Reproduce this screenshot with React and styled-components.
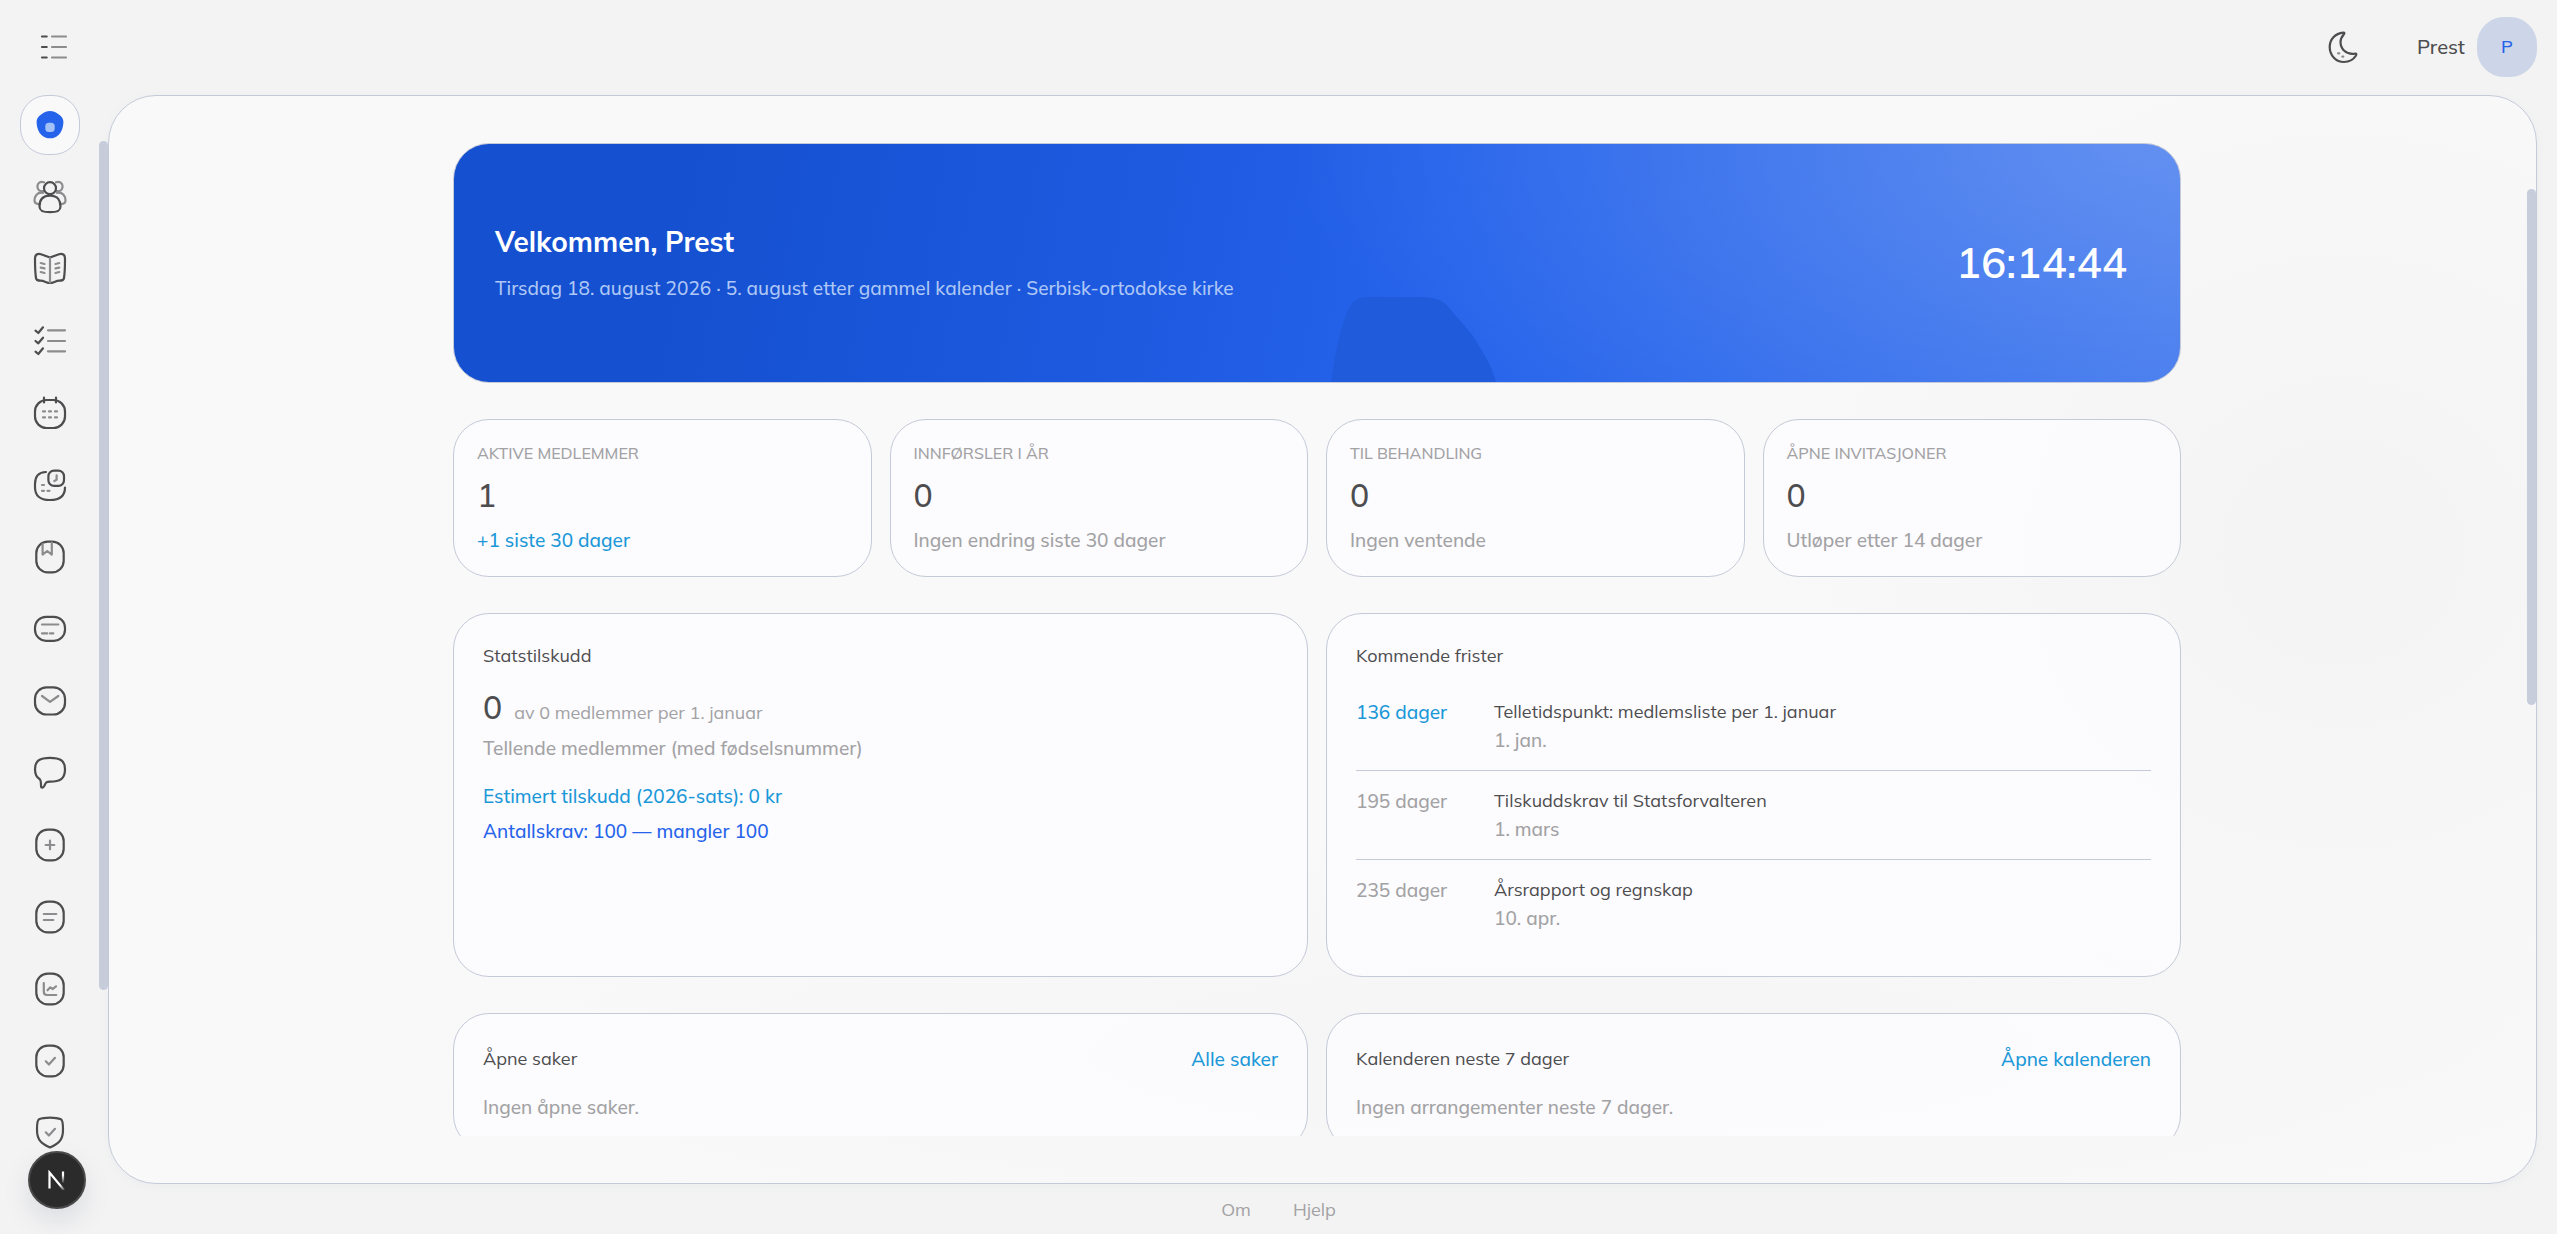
import React from 'react';
import styled, { createGlobalStyle } from 'styled-components';

const stats = [
    { label: 'AKTIVE MEDLEMMER', value: '1', note: '+1 siste 30 dager', accent: true },
    { label: 'INNFØRSLER I ÅR', value: '0', note: 'Ingen endring siste 30 dager' },
    { label: 'TIL BEHANDLING', value: '0', note: 'Ingen ventende' },
    { label: 'ÅPNE INVITASJONER', value: '0', note: 'Utløper etter 14 dager' },
];

const deadlines = [
    { days: '136 dager', title: 'Telletidspunkt: medlemsliste per 1. januar', date: '1. jan.', accent: true },
    { days: '195 dager', title: 'Tilskuddskrav til Statsforvalteren', date: '1. mars' },
    { days: '235 dager', title: 'Årsrapport og regnskap', date: '10. apr.' },
];

// Rounded portrait frame shared by many of the menu icons
const Frame = () => <rect x="4.3" y="2.7" width="27.4" height="30.6" rx="11.5" />;

const HomeIcon = () => (
    <Icon viewBox="0 0 36 36">
        <path
            d="M18 4C15 4 12.5 5.2 9.5 7.2C6 9.4 4.3 12 4.6 16C4.9 21 6.5 25.2 9.5 28C12 30.6 14.5 31.3 18 31.3C21.5 31.3 24 30.6 26.5 28C29.5 25.2 31.1 21 31.4 16C31.7 12 30 9.4 26.5 7.2C23.5 5.2 21 4 18 4Z"
            fill="#2563eb"
            stroke="none"
        />
        <rect x="13.3" y="15.7" width="9.4" height="9.4" rx="3.6" fill="#a3c0f8" stroke="none" />
    </Icon>
);

const PeopleIcon = () => (
    <Icon viewBox="0 0 36 36">
        <g className="soft">
            <path d="M12 3.3C8.2 2 5.4 4 5.4 7.5C5.4 11 8 12.6 11.4 12" />
            <path d="M24 3.3C27.8 2 30.6 4 30.6 7.5C30.6 11 28 12.6 24.6 12" />
            <path d="M11 13.8C5 13 2.5 17 2.5 21.5C2.5 24.3 4 25 7 25.2" />
            <path d="M25 13.8C31 13 33.5 17 33.5 21.5C33.5 24.3 32 25 29 25.2" />
        </g>
        <circle cx="18" cy="9.2" r="6" />
        <path d="M18 16.7C10 16.7 7.5 21.5 7.5 27.5C7.5 31.5 10 33.2 18 33.2C26 33.2 28.5 31.5 28.5 27.5C28.5 21.5 26 16.7 18 16.7Z" />
    </Icon>
);

const BookIcon = () => (
    <Icon viewBox="0 0 36 36">
        <path d="M18 6.5L9 3.2C5.5 2.2 3 3.5 3 7.5C3 15 3.2 22 4 27C4.3 29.5 6 29.7 8.5 29.7C12.5 29.7 14.5 32 18 32C21.5 32 23.5 29.7 27.5 29.7C30 29.7 31.7 29.5 32 27C32.8 22 33 15 33 7.5C33 3.5 30.5 2.2 27 3.2Z" />
        <path className="soft" d="M18 7V31.5M8.7 12L12.5 13M8.7 16.6L12.5 17.4M8.7 21L12.5 22M27.3 12L23.5 13M27.3 16.6L23.5 17.4M27.3 21L23.5 22" />
    </Icon>
);

const ChecklistIcon = () => (
    <Icon viewBox="0 0 36 36">
        <path d="M3.5 7.7L6.3 10L11 4.3M3.5 18L6.3 20.3L11 14.7M3.5 28.7L6.3 31L11 25.3" />
        <path className="soft" d="M16 7.3H33M16 18H33M16 28.3H33" />
    </Icon>
);

const CalendarIcon = () => (
    <Icon viewBox="0 0 36 36">
        <rect x="3" y="5" width="30" height="28" rx="11.5" />
        <path d="M12 2.5V7.5M24 2.5V7.5" />
        <path className="soft" d="M11 16.4H13M17 16.4H19M23 16.4H25M11 22.4H13M17 22.4H19M23 22.4H25" />
    </Icon>
);

const ScheduleIcon = () => (
    <Icon viewBox="0 0 36 36">
        <path d="M14 5C6.5 5.2 3 9 3 17V20C3 29 7.5 33 18 33C28.5 33 33 29 33 20.5" />
        <rect x="16.4" y="3.6" width="15.6" height="15.2" rx="5.6" />
        <path className="soft" d="M24.6 8.3V12.8L22.3 14M10 18H12M10 23.8H12M15.5 23.8H17.5" />
    </Icon>
);

const BookmarkIcon = () => (
    <Icon viewBox="0 0 36 36">
        <Frame />
        <path className="soft" d="M10.6 5V15.6L15.2 12L19.8 15.6V3.5" />
    </Icon>
);

const CardIcon = () => (
    <Icon viewBox="0 0 36 36">
        <rect x="3" y="5.8" width="30" height="24" rx="11" />
        <path className="soft" d="M10 13.5H26.3M10 22.4H15.3M18 22.4H21.3" />
    </Icon>
);

const MailIcon = () => (
    <Icon viewBox="0 0 36 36">
        <rect x="3" y="4.3" width="30" height="27.2" rx="11.5" />
        <path className="soft" d="M10 13L18 18.9L26.3 13" />
    </Icon>
);

const ChatIcon = () => (
    <Icon viewBox="0 0 36 36">
        <path d="M18 2.9C8 2.9 3 5.5 3 14C3 19 4.2 22 7.5 24C9 25 9 27 9 30.5C9 33.5 11 33.2 12.2 31C13.8 27.8 14 26.6 18 26.6C28 26.6 33 24 33 14C33 5.5 28 2.9 18 2.9Z" />
    </Icon>
);

const PlusIcon = () => (
    <Icon viewBox="0 0 36 36">
        <Frame />
        <path className="soft" d="M18 13.7V22.3M13.7 18H22.3" />
    </Icon>
);

const NoteIcon = () => (
    <Icon viewBox="0 0 36 36">
        <Frame />
        <path className="soft" d="M11.8 15H24.3M11.8 21H21.3" />
    </Icon>
);

const ChartIcon = () => (
    <Icon viewBox="0 0 36 36">
        <Frame />
        <path className="soft" d="M11.8 12V20.5Q11.8 24 15 24H24.3M15.5 19.3L18.3 16.3L20.8 18L24 15.3" />
    </Icon>
);

const DoneIcon = () => (
    <Icon viewBox="0 0 36 36">
        <Frame />
        <path className="soft" d="M13.8 18.3L16.9 21.5L23 14.8" />
    </Icon>
);

const ShieldIcon = () => (
    <Icon viewBox="0 0 36 36">
        <path d="M18 2.7C13 2.7 9.5 3.3 7 4.3C5.2 5.3 5 9 5 14.5C5 23 7 27.5 18 32.5C29 27.5 31 23 31 14.5C31 9 30.8 5.3 29 4.3C26.5 3.3 23 2.7 18 2.7Z" />
        <path className="soft" d="M13.8 17.3L16.9 20.5L23 13.8" />
    </Icon>
);

const MenuIcon = () => (
    <Icon viewBox="0 0 36 36">
        <path d="M6 7.5H10.7M6 18H10.7M6 28.5H10.7" />
        <path className="soft" d="M16 7.5H30M16 18H30M16 28.5H30" />
    </Icon>
);

const MoonIcon = () => (
    <Icon viewBox="0 0 36 36">
        <path d="M18.3 3.6C10 4.5 4.7 10.5 4.7 18C4.7 26.5 11 33 19 33C24.500 33 28.500 30.500 31 26.500C32 24.500 31 24.300 29 24.800C21 25.500 15.500 20 15.500 13C15.500 9.500 17 7.500 19 5C19.800 4 19.500 3.500 18.300 3.600Z" />
        <path className="soft" d="M13 24.3H14.3M17.3 27.6H18.3" />
    </Icon>
);

const menu = [
    { name: 'Oversikt', icon: HomeIcon },
    { name: 'Medlemmer', icon: PeopleIcon },
    { name: 'Kirkebok', icon: BookIcon },
    { name: 'Oppgaver', icon: ChecklistIcon },
    { name: 'Kalender', icon: CalendarIcon },
    { name: 'Timeplan', icon: ScheduleIcon },
    { name: 'Protokoll', icon: BookmarkIcon },
    { name: 'Betalinger', icon: CardIcon },
    { name: 'E-post', icon: MailIcon },
    { name: 'Meldinger', icon: ChatIcon },
    { name: 'Ny innførsel', icon: PlusIcon },
    { name: 'Dokumenter', icon: NoteIcon },
    { name: 'Rapporter', icon: ChartIcon },
    { name: 'Godkjenning', icon: DoneIcon },
    { name: 'Sikkerhet', icon: ShieldIcon },
];

const App = () => {
    return (
        <Page>
            <GlobalStyle />
            <Header>
                <IconButton type="button" aria-label="Meny">
                    <MenuIcon />
                </IconButton>
                <UserArea>
                    <IconButton type="button" aria-label="Mørk modus">
                        <MoonIcon />
                    </IconButton>
                    <UserButton type="button">
                        Prest
                        <Avatar>P</Avatar>
                    </UserButton>
                </UserArea>
            </Header>

            <Body>
                <Sidebar>
                    {menu.map(({ name, icon: MenuItemIcon }, index) => (
                        <MenuLink key={name} href="#" aria-label={name} $active={index === 0}>
                            <MenuItemIcon />
                        </MenuLink>
                    ))}
                    <ScrollThumb $top="46px" $size="78%" />
                </Sidebar>

                <Main>
                    <ScrollArea>
                        <Content>
                            <Banner>
                                <BannerShape viewBox="0 0 168 86">
                                    <path d="M0 86C3 66 8 34 17 14C22 4 28 1 36 1H90C106 1 113 5 119 13C132 28 142 38 148 50C157 64 162 75 165 86Z" fill="#1f5bdb" />
                                </BannerShape>
                                <div>
                                    <BannerTitle>Velkommen, Prest</BannerTitle>
                                    <BannerText>
                                        Tirsdag 18. august 2026 · 5. august etter gammel kalender · Serbisk-ortodokse kirke
                                    </BannerText>
                                </div>
                                <Clock>16:14:44</Clock>
                            </Banner>

                            <StatGrid>
                                {stats.map((stat) => (
                                    <StatCard key={stat.label}>
                                        <StatLabel>{stat.label}</StatLabel>
                                        <BigNumber>{stat.value}</BigNumber>
                                        <Text $color={stat.accent ? '#1a98d8' : undefined}>{stat.note}</Text>
                                    </StatCard>
                                ))}
                            </StatGrid>

                            <PanelGrid>
                                <Panel>
                                    <PanelTitle>Statstilskudd</PanelTitle>
                                    <GrantInfo>
                                        <GrantCount>
                                            <BigNumber>0</BigNumber>
                                            <SmallText>av 0 medlemmer per 1. januar</SmallText>
                                        </GrantCount>
                                        <Text>Tellende medlemmer (med fødselsnummer)</Text>
                                    </GrantInfo>
                                    <GrantInfo>
                                        <Text $color="#1a98d8">Estimert tilskudd (2026-sats): 0 kr</Text>
                                        <Text $color="#2563eb">Antallskrav: 100 — mangler 100</Text>
                                    </GrantInfo>
                                </Panel>
                                <Panel>
                                    <PanelTitle>Kommende frister</PanelTitle>
                                    <DeadlineList>
                                        {deadlines.map((item) => (
                                            <Deadline key={item.title}>
                                                <Days $accent={item.accent}>{item.days}</Days>
                                                <div>
                                                    <DeadlineTitle>{item.title}</DeadlineTitle>
                                                    <DeadlineDate>{item.date}</DeadlineDate>
                                                </div>
                                            </Deadline>
                                        ))}
                                    </DeadlineList>
                                </Panel>
                            </PanelGrid>

                            <PanelGrid>
                                <Panel>
                                    <PanelHead>
                                        <PanelTitle>Åpne saker</PanelTitle>
                                        <PanelLink href="#">Alle saker</PanelLink>
                                    </PanelHead>
                                    <Text>Ingen åpne saker.</Text>
                                </Panel>
                                <Panel>
                                    <PanelHead>
                                        <PanelTitle>Kalenderen neste 7 dager</PanelTitle>
                                        <PanelLink href="#">Åpne kalenderen</PanelLink>
                                    </PanelHead>
                                    <Text>Ingen arrangementer neste 7 dager.</Text>
                                </Panel>
                            </PanelGrid>
                        </Content>
                    </ScrollArea>
                    <ScrollThumb $top="93px" $size="47.5%" />
                </Main>
            </Body>

            <Footer>
                <FooterLink href="#">Om</FooterLink>
                <FooterLink href="#">Hjelp</FooterLink>
            </Footer>

            <DevBadge type="button" aria-label="Utviklerverktøy">
                <DevLogo viewBox="0 0 20 20">
                    <defs>
                        <linearGradient id="bar" x1="0" y1="0" x2="0" y2="1">
                            <stop offset="0.3" stopColor="#fff" />
                            <stop offset="1" stopColor="#fff" stopOpacity="0" />
                        </linearGradient>
                        <linearGradient id="slash" x1="0" y1="0" x2="1" y2="1">
                            <stop offset="0.7" stopColor="#fff" />
                            <stop offset="1" stopColor="#fff" stopOpacity="0.2" />
                        </linearGradient>
                    </defs>
                    <path d="M2.5 18.5V2.5L17 20" stroke="url(#slash)" strokeWidth="2.2" fill="none" />
                    <rect x="14.9" y="1.5" width="2.2" height="12" fill="url(#bar)" />
                </DevLogo>
            </DevBadge>
        </Page>
    );
};

// Styled components for styling
const GlobalStyle = createGlobalStyle`
    * {
        box-sizing: border-box;
    }

    body {
        margin: 0;
        background: #f3f3f3;
        color: #4d4d4f;
        font-family: Mulish, Inter, "Open Sans", sans-serif;
        font-size: 19px;
        font-weight: 500;
        line-height: 30px;
        font-feature-settings: "cv11", "cv05";
    }

    h1, h2, p, ul {
        margin: 0;
        padding: 0;
    }

    a {
        text-decoration: none;
    }

    button {
        padding: 0;
        border: none;
        background: none;
        color: inherit;
        font: inherit;
        font-feature-settings: inherit;
        cursor: pointer;
    }
`;

const Page = styled.div`
    display: grid;
    grid-template-rows: 95px minmax(0, 1fr) 50px;
    height: 100vh;
`;

const Icon = styled.svg`
    display: block;
    width: 36px;
    height: 36px;
    fill: none;
    stroke: #4d4d4f;
    stroke-width: 2.2;
    stroke-linecap: round;
    stroke-linejoin: round;

    .soft {
        stroke: #8c8c8e;
    }
`;

const Header = styled.header`
    display: flex;
    align-items: center;
    justify-content: space-between;
    padding: 0 20px 1px 36px;
`;

const IconButton = styled.button`
    display: block;
`;

const UserArea = styled.div`
    display: flex;
    align-items: center;
    gap: 56px;
`;

const UserButton = styled.button`
    display: flex;
    align-items: center;
    gap: 12px;
    font-size: 20px;
`;

const Avatar = styled.span`
    display: flex;
    align-items: center;
    justify-content: center;
    width: 60px;
    height: 60px;
    border-radius: 27px;
    background: #ccd6e8;
    color: #2563eb;
    font-size: 18px;
`;

const Body = styled.div`
    display: flex;
    padding-right: 20px;
`;

const Sidebar = styled.nav`
    position: relative;
    flex: none;
    display: flex;
    flex-direction: column;
    gap: 12px;
    width: 108px;
    padding-left: 20px;
    overflow: hidden;
`;

const MenuLink = styled.a`
    flex: none;
    display: flex;
    align-items: center;
    justify-content: center;
    width: 60px;
    height: 60px;
    border: 1px solid ${(p) => (p.$active ? '#c5cad8' : 'transparent')};
    border-radius: 27px;
    background: ${(p) => (p.$active ? '#f9f9fa' : 'transparent')};
`;

const ScrollThumb = styled.div`
    position: absolute;
    top: ${(p) => p.$top};
    right: 0;
    width: 9px;
    height: ${(p) => p.$size};
    border-radius: 5px;
    background: #c8cddb;
`;

const Main = styled.main`
    position: relative;
    flex: 1;
    min-width: 0;
    display: flex;
    padding: 47px 11px 47px 0;
    border: 1px solid #c5cad8;
    border-radius: 48px;
    background:
        radial-gradient(ellipse 24% 50% at 92% 42%, rgba(242, 242, 242, 0.8), transparent),
        radial-gradient(ellipse 50% 20% at 60% 88%, rgba(242, 242, 242, 0.6), transparent),
        #f9f9f9;
    box-shadow: 0 2px 8px rgba(190, 198, 215, 0.12);
`;

const ScrollArea = styled.div`
    flex: 1;
    min-width: 0;
    overflow-y: auto;
    scrollbar-width: none;
`;

const Content = styled.div`
    display: flex;
    flex-direction: column;
    gap: 36px;
    max-width: 1728px;
    margin: 0 auto;
`;

const Banner = styled.section`
    position: relative;
    display: flex;
    align-items: center;
    justify-content: space-between;
    min-height: 240px;
    padding: 0 53px 0 41px;
    border: 1px solid #c5cad8;
    border-radius: 36px;
    background:
        radial-gradient(ellipse 50% 150% at 98% 0, rgba(255, 255, 255, 0.18), rgba(255, 255, 255, 0)),
        linear-gradient(100deg, #1450cf 12%, #1d5ae0 40%, #2563eb 56%, #4279ee 100%);
    color: #fff;
    overflow: hidden;
`;

// Decorative silhouette rising from the bottom edge
const BannerShape = styled.svg`
    position: absolute;
    left: 50.8%;
    bottom: 0;
    width: 168px;
    height: 86px;
`;

const BannerTitle = styled.h1`
    margin-bottom: 12px;
    font-size: 28px;
    line-height: 38px;
    font-weight: 700;
`;

const BannerText = styled.p`
    color: #aec7f6;
`;

const Clock = styled.div`
    font-size: 42px;
    line-height: 48px;
    font-weight: 600;
`;

const StatGrid = styled.section`
    display: grid;
    grid-template-columns: repeat(4, 1fr);
    gap: 18px;
`;

const Card = styled.div`
    border: 1px solid #c5cad8;
    border-radius: 36px;
    background: rgba(253, 251, 255, 0.8);
`;

const StatCard = styled(Card)`
    display: flex;
    flex-direction: column;
    gap: 9px;
    padding: 21px 23px;
`;

const StatLabel = styled.p`
    color: #a2a2a4;
    font-size: 16px;
    line-height: 24px;
`;

const BigNumber = styled.strong`
    font-size: 32px;
    line-height: 42px;
    font-weight: 500;
`;

const Text = styled.p`
    color: ${(p) => p.$color || '#a2a2a4'};
`;

const SmallText = styled.span`
    color: #a2a2a4;
    font-size: 18px;
    font-weight: 400;
`;

const PanelGrid = styled.section`
    display: grid;
    grid-template-columns: repeat(2, 1fr);
    gap: 18px;
`;

const Panel = styled(Card)`
    padding: 30px 29px 28px;
`;

const PanelTitle = styled.h2`
    font-size: 18px;
    line-height: 24px;
    font-weight: 400;
`;

const PanelHead = styled.div`
    display: flex;
    align-items: center;
    justify-content: space-between;
    margin-bottom: 18px;
`;

const PanelLink = styled.a`
    color: #1a98d8;
`;

const GrantInfo = styled.div`
    display: flex;
    flex-direction: column;
    gap: 5px;
    margin-top: 18px;
`;

const GrantCount = styled.div`
    display: flex;
    align-items: baseline;
    gap: 12px;
`;

const DeadlineList = styled.ul`
    margin-top: 14px;
    list-style: none;
`;

const Deadline = styled.li`
    display: grid;
    grid-template-columns: 120px 1fr;
    gap: 18px;
    padding: 16px 0;
    line-height: 28px;

    & + & {
        border-top: 1px solid #c5cad8;
    }
`;

const Days = styled.span`
    color: ${(p) => (p.$accent ? '#1a98d8' : '#a2a2a4')};
`;

const DeadlineTitle = styled.p`
    font-size: 18px;
    font-weight: 400;
`;

const DeadlineDate = styled.p`
    color: #a2a2a4;
`;

const Footer = styled.footer`
    display: flex;
    align-items: center;
    justify-content: center;
    gap: 42px;
    padding-top: 2px;
`;

const FooterLink = styled.a`
    color: #a2a2a4;
    font-size: 18px;
    font-weight: 400;
`;

const DevBadge = styled.button`
    position: fixed;
    left: 28px;
    bottom: 25px;
    display: flex;
    align-items: center;
    justify-content: center;
    width: 58px;
    height: 58px;
    border: 2px solid #4a4a4a;
    border-radius: 50%;
    background: #2b2b2b;
    box-shadow: 0 12px 24px rgba(120, 130, 160, 0.18);
`;

const DevLogo = styled.svg`
    width: 20px;
    height: 20px;
`;

export default App;
